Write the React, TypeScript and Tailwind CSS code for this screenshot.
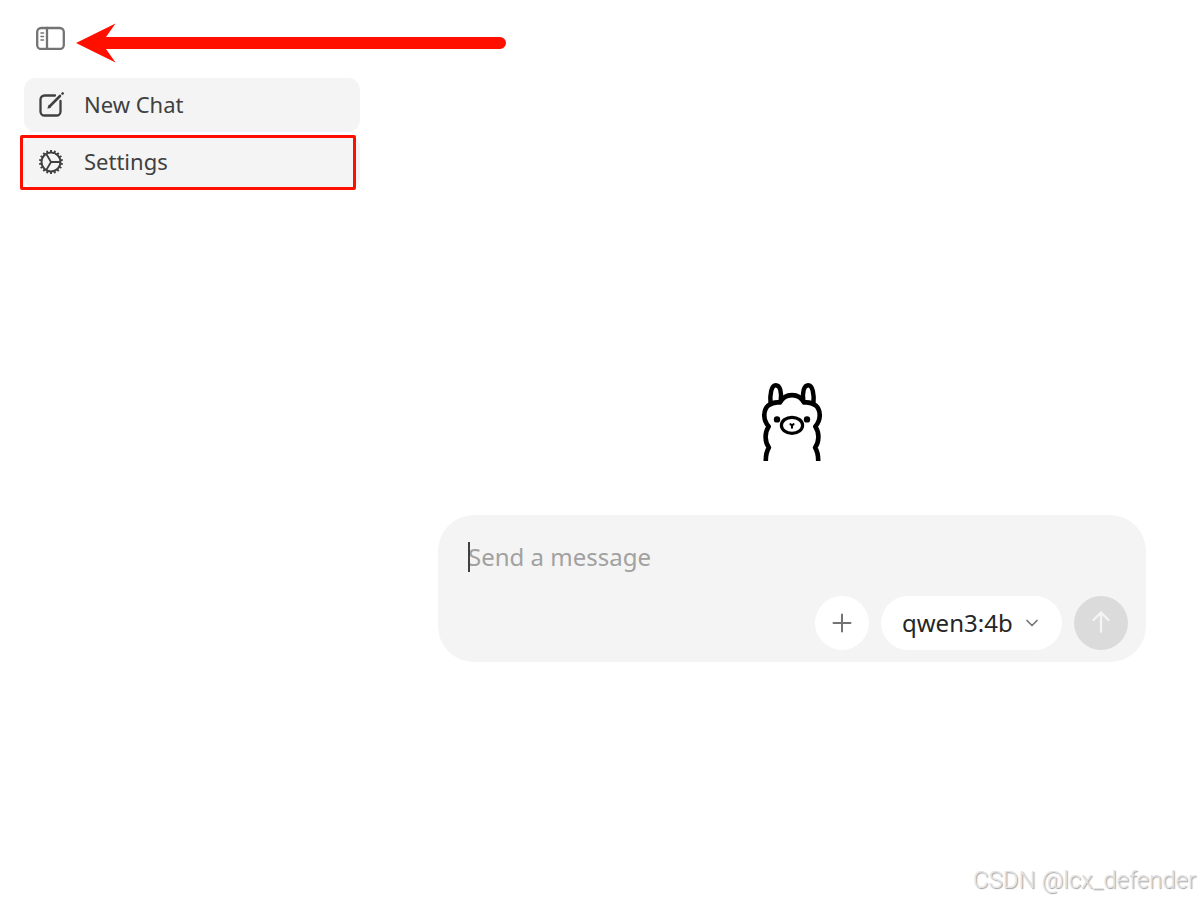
import React, { useState } from 'react';
import { ChevronDown } from 'lucide-react';

const SidebarIcon = () => (
  <svg className="w-[30px] h-6" viewBox="0 0 30 24" fill="none" stroke="#737373" strokeWidth="2.300" strokeLinecap="round">
    <rect x="1.200" y="2" width="26.600" height="21" rx="4" />
    <path d="M11 2v21" />
    <path d="M5 7h2.500M5 10.500h2.500M5 14h2.500" strokeWidth="1.500" />
  </svg>
);

const ComposeIcon = () => (
  <svg className="w-7 h-7" viewBox="0 0 28 28" fill="none" stroke="#404040" strokeWidth="2.300" strokeLinecap="round">
    <path d="M18 4.500H7.500a4 4 0 0 0-4 4v12a4 4 0 0 0 4 4h12a4 4 0 0 0 4-4V10" />
    <path d="M12.500 15.500 23 5" strokeWidth="2.600" />
    <path d="M10.800 17.200l1-3 2 1.900z" strokeWidth="0.500" fill="#404040" />
    <path d="M25.500 2.600l.2-.2" strokeWidth="2.600" />
  </svg>
);

const TEETH = [0, 20, 40, 60, 80, 100, 120, 140, 160, 180, 200, 220, 240, 260, 280, 300, 320, 340];

const GearIcon = () => (
  <svg className="w-7 h-7" viewBox="0 0 28 28" fill="none" stroke="#404040" strokeWidth="2">
    <circle cx="14" cy="14" r="9.500" />
    {TEETH.map((angle) => (
      <path key={angle} d="M14 5V2" strokeWidth="1.900" transform={`rotate(${angle} 14 14)`} />
    ))}
    <path d="M14 14h9M14 14 9.300 6M14 14 9.300 22" strokeWidth="1.800" />
  </svg>
);

const Llama = () => (
  <svg className="w-[60px] h-[78px]" viewBox="0 0 60 78" fill="none" stroke="#000" strokeWidth="4.400" strokeLinejoin="round">
    <path d="M8.600 21C7.600 11 9.500 2.200 13.800 2.200S19.800 9 18.700 18" />
    <path d="M51.400 21C52.400 11 50.500 2.200 46.200 2.200S40.200 9 41.300 18" />
    <path d="M3.800 78C3.700 72 4.500 68.500 6.900 64.500 2.800 59 2.300 50 6.700 43.500 .7 37 1 27 6.500 22.300 9.500 20 13.500 18.900 18 19.500 20.500 14.500 25 12.100 30 12.100S39.500 14.500 42 19.500C46.500 18.900 50.500 20 53.500 22.300 59 27 59.300 37 53.300 43.500 57.700 50 57.200 59 53.100 64.500 55.500 68.500 56.300 72 56.200 78" strokeWidth="4.600" />
    <ellipse cx="30" cy="42.300" rx="10.600" ry="8" strokeWidth="3.200" />
    <circle cx="15" cy="36.400" r="3.200" fill="#000" stroke="none" />
    <circle cx="45" cy="36.400" r="3.200" fill="#000" stroke="none" />
    <path d="M28.500 41.200 30 42.400l1.500-1.200M30 42.400v2.400" strokeWidth="2.100" strokeLinecap="round" />
  </svg>
);

const PointerArrow = () => (
  <svg className="absolute left-[76px] top-[23px] w-[430px] h-10 pointer-events-none" viewBox="0 0 430 40">
    <path d="M0 20 39.500 0.500 30 14H424a6 6 0 0 1 0 12H30l9.500 13.500z" fill="#ff0f00" />
  </svg>
);

export default function App() {
  const [message, setMessage] = useState('');
  const [model, setModel] = useState('qwen3:4b');

  return (
    <div className="relative min-h-screen flex bg-white text-[#404040] font-['Noto_Sans',sans-serif]">
      {/* Sidebar */}
      <aside className="w-96 shrink-0 px-6 pt-[26px]">
        <button type="button" aria-label="Toggle sidebar" className="ml-3 mb-7 block">
          <SidebarIcon />
        </button>
        <nav className="flex flex-col gap-[3px] text-[22px]">
          <a href="#new" className="h-[54px] px-[13px] flex items-center gap-[19px] rounded-xl bg-[#f4f4f4]">
            <ComposeIcon />
            <span className="pb-0.5">New Chat</span>
          </a>
          <a href="#settings" className="relative h-[54px] px-[13px] flex items-center gap-[19px] rounded-xl bg-[#f4f4f4]">
            <GearIcon />
            <span className="pb-0.5">Settings</span>
            <span className="absolute -left-1 right-1 top-0 -bottom-px border-3 border-[#ff0f00] rounded-xs"></span>
          </a>
        </nav>
      </aside>
      <PointerArrow />

      {/* Chat area */}
      <main className="flex-1 min-w-0 px-[54px] pt-[145px] flex flex-col items-center justify-center gap-[54px]">
        <Llama />
        <form className="w-full pt-6 pb-3 rounded-[36px] bg-[#f4f4f4]" onSubmit={(e) => e.preventDefault()}>
          <div className="relative px-[30px]">
            <textarea
              aria-label="Message"
              rows={1}
              value={message}
              onChange={(e) => setMessage(e.target.value)}
              placeholder="Send a message"
              className="block w-full h-9 resize-none bg-transparent text-2xl leading-9 placeholder:text-[#a1a1a1] outline-none overflow-hidden"
            />
            {!message && <span className="absolute left-[30px] inset-y-[3px] w-0.5 bg-[#404040]"></span>}
          </div>
          <div className="mt-[21px] px-[18px] flex justify-end gap-3">
            <button type="button" aria-label="Add file" className="size-[54px] rounded-full bg-white flex items-center justify-center">
              <svg className="size-5" viewBox="0 0 20 20" fill="none" stroke="#737373" strokeWidth="2" strokeLinecap="round">
                <path d="M10 1.500v17M1.500 10h17" />
              </svg>
            </button>
            <div className="relative">
              <select
                aria-label="Model"
                value={model}
                onChange={(e) => setModel(e.target.value)}
                className="appearance-none w-[181px] h-[54px] pl-[21px] pr-10 rounded-full bg-white text-2xl text-[#262626] outline-none"
              >
                <option>qwen3:4b</option>
              </select>
              <ChevronDown className="absolute right-5 top-[17px] size-5 text-[#737373] pointer-events-none" strokeWidth={2} />
            </div>
            <button type="submit" aria-label="Send" className="size-[54px] rounded-full bg-[#dbdbdb] flex items-center justify-center">
              <svg className="size-7" viewBox="0 0 28 28" fill="none" stroke="#f4f4f4" strokeWidth="2.400" strokeLinecap="round" strokeLinejoin="round">
                <path d="M14 22.500V3.500M6.500 11 14 3.500l7.500 7.500" />
              </svg>
            </button>
          </div>
        </form>
      </main>

      <span className="absolute right-1 bottom-1 text-2xl leading-8 font-light text-[#e4e4e4] font-['Roboto',sans-serif] [text-shadow:1px_1px_1px_#a0a0a0]">
        CSDN @lcx_defender
      </span>
    </div>
  );
}
